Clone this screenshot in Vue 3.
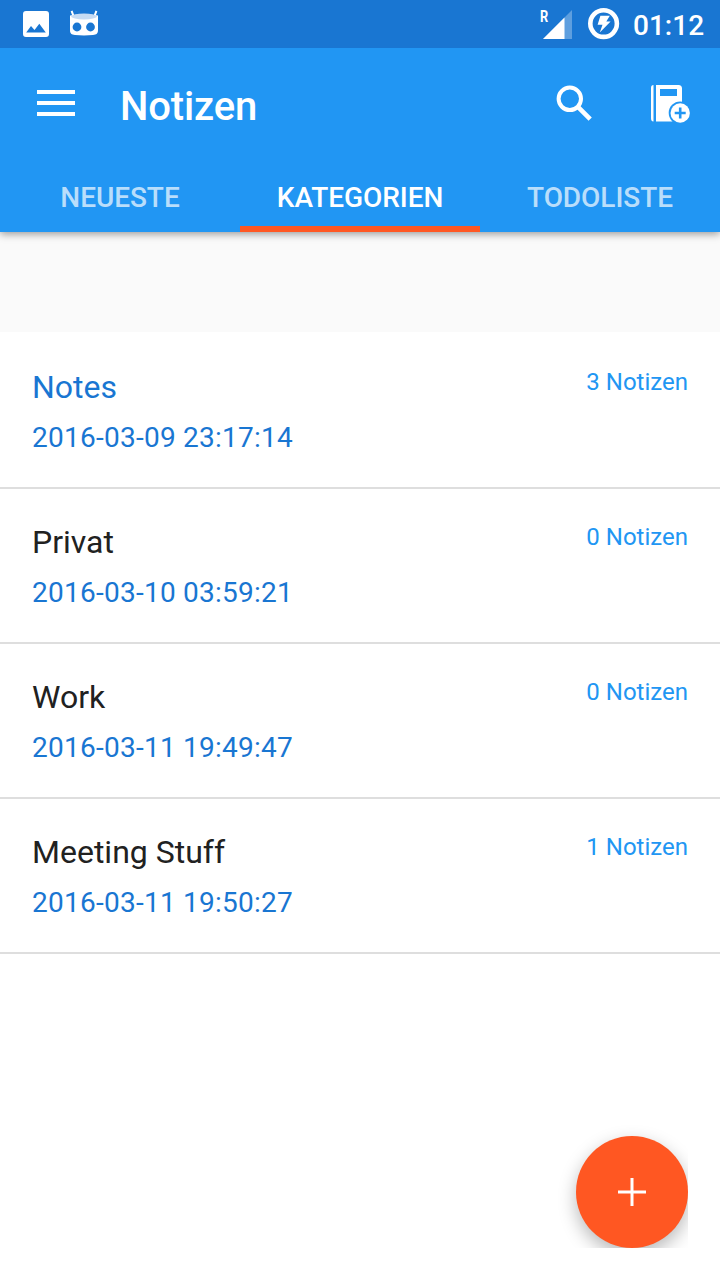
<script setup>
const tabs = [
  { label: 'NEUESTE', active: false },
  { label: 'KATEGORIEN', active: true },
  { label: 'TODOLISTE', active: false },
]
const categories = [
  { name: 'Notes', date: '2016-03-09 23:17:14', count: 3, selected: true },
  { name: 'Privat', date: '2016-03-10 03:59:21', count: 0, selected: false },
  { name: 'Work', date: '2016-03-11 19:49:47', count: 0, selected: false },
  { name: 'Meeting Stuff', date: '2016-03-11 19:50:27', count: 1, selected: false },
]
</script>

<template>
  <div class="screen">
    <div class="status">
      <svg class="image-icon" width="26" height="26" viewBox="0 0 26 26">
        <path fill="#fff" fill-rule="evenodd" d="M3 0h20a3 3 0 0 1 3 3v20a3 3 0 0 1-3 3H3a3 3 0 0 1-3-3V3a3 3 0 0 1 3-3zM3.200 21.500h19.600L16.300 12.800 11.500 19.100 8 14.900z" />
      </svg>
      <svg class="robot-icon" width="30" height="28" viewBox="0 0 30 28">
        <path d="M2.600 .8l2 5.500M27.400 .8l-2 5.500" stroke="#fff" stroke-width="2" />
        <path fill="#fff" d="M1 5.500Q15 3 29 5.500V20c0 3.500-1.500 4.700-5 5-6 .6-12 .6-18 0C2.500 24.700 1 23.500 1 20z" />
        <ellipse cx="15" cy="6.500" rx="12.800" ry="2.900" fill="#c6dbf3" />
        <circle cx="8" cy="17" r="4.400" fill="#1976d2" />
        <circle cx="21.500" cy="17" r="4.400" fill="#1976d2" />
      </svg>
      <span class="gap"></span>
      <span class="signal">
        <span class="roaming">R</span>
        <svg width="29" height="29" viewBox="0 0 29 29">
          <path d="M29 0v29H0z" fill="#fff" fill-opacity=".3" />
          <path d="M21.500 7.500v21.500H0z" fill="#fff" />
        </svg>
      </span>
      <svg class="battery" width="32" height="32" viewBox="0 0 32 32">
        <circle cx="15.600" cy="15.600" r="13.300" fill="none" stroke="#fff" stroke-width="4.600" />
        <path fill="#fff" d="M12.400 7.800h9.400l-3.500 5.600h4.300L11.800 24.400l2.700-7.700H9.600z" />
      </svg>
      <span class="clock">01:12</span>
    </div>

    <header class="appbar">
      <div class="toolbar">
        <svg class="menu" width="38" height="26" viewBox="0 0 38 26">
          <path d="M0 0h38v4H0zM0 11h38v4H0zM0 22h38v4H0z" fill="#fff" />
        </svg>
        <h1>Notizen</h1>
        <svg class="search" width="38" height="38" viewBox="0 0 38 38">
          <circle cx="13.800" cy="13.800" r="11.200" fill="none" stroke="#fff" stroke-width="4" />
          <path d="M22.200 22.200L34.200 34.200" stroke="#fff" stroke-width="4.600" />
        </svg>
        <svg class="book" width="40" height="40" viewBox="0 0 40 40">
          <path d="M3.500 1v36.500C1.500 37.500 1 36 1 34V4C1 2 1.800 1 3.500 1z" fill="#fff" />
          <path fill-rule="evenodd" d="M6 1h22.500a3.500 3.500 0 0 1 3.500 3.500V37.500H6zM10 5v7h17V5z" fill="#fff" />
          <circle cx="30.200" cy="29" r="11.500" fill="#2196f3" />
          <circle cx="30.200" cy="29" r="9.700" fill="#fff" />
          <path d="M30.200 23.500v11M24.700 29h11" stroke="#2196f3" stroke-width="2.600" />
        </svg>
      </div>
      <nav class="tabs">
        <div v-for="tab in tabs" :key="tab.label" class="tab" :class="{ active: tab.active }">{{ tab.label }}</div>
      </nav>
    </header>

    <div class="spacer"></div>

    <main class="list">
      <article v-for="item in categories" :key="item.name" class="row">
        <div>
          <div class="name" :class="{ selected: item.selected }">{{ item.name }}</div>
          <div class="date">{{ item.date }}</div>
        </div>
        <div class="count">{{ item.count }} Notizen</div>
      </article>
    </main>

    <div class="fab-frame">
      <button class="fab" aria-label="Neu">
        <svg width="28" height="28" viewBox="0 0 28 28">
          <path d="M12.500 0h3v28h-3zM0 12.500h28v3H0z" fill="#fff" />
        </svg>
      </button>
    </div>
  </div>
</template>

<style>
body { margin: 0; }
</style>

<style scoped>
.screen {
  position: relative;
  width: 720px;
  height: 1280px;
  overflow: hidden;
  background: #fff;
  font-family: Roboto, sans-serif;
}
svg { display: block; flex: none; }
.status {
  position: relative;
  z-index: 1;
  display: flex;
  height: 48px;
  box-sizing: border-box;
  padding: 0 16px 0 23px;
  background: #1976d2;
  color: #fff;
}
.image-icon { margin-top: 11px; }
.robot-icon { margin: 10px 0 0 20px; }
.gap { flex: 1; }
.signal { display: flex; position: relative; padding: 10px 0 0 3px; }
.roaming {
  position: absolute;
  left: 0;
  top: 9px;
  font-size: 16px;
  line-height: 16px;
  font-weight: 700;
  transform: scaleX(.8);
  transform-origin: 0 0;
}
.battery { margin: 8px 0 0 16px; }
.clock {
  width: 71px;
  margin-left: 13px;
  padding-top: 9px;
  font-size: 28px;
  line-height: 33px;
  font-weight: 500;
  white-space: nowrap;
}
.appbar {
  position: relative;
  height: 184px;
  background: #2196f3;
  color: #fff;
  box-shadow: 0 2px 8px rgba(0, 0, 0, .4);
}
.toolbar { display: flex; height: 112px; padding: 0 30px 0 37px; }
.menu { margin-top: 42px; }
h1 {
  flex: 1;
  margin: 35px 0 0 45px;
  font-size: 40px;
  line-height: 48px;
  font-weight: 500;
  letter-spacing: -.15px;
}
.search { margin: 37px 56px 0 0; }
.book { margin-top: 36px; }
.tabs { display: grid; grid-template-columns: repeat(3, 1fr); height: 72px; }
.tab {
  box-sizing: border-box;
  padding-top: 21px;
  text-align: center;
  font-size: 28px;
  line-height: 33px;
  font-weight: 500;
  letter-spacing: -.05px;
  color: rgba(255, 255, 255, .7);
}
.tab.active { color: #fff; border-bottom: 6px solid #ff5722; }
.spacer { height: 100px; background: #fafafa; }
.list { padding-top: 2px; }
.row {
  display: flex;
  justify-content: space-between;
  box-sizing: border-box;
  height: 155px;
  padding: 34px 32px 0;
  border-bottom: 2px solid #dedede;
}
.name { font-size: 32px; line-height: 38px; color: #212121; }
.name.selected { color: #1976d2; }
.date {
  margin-top: 15px;
  font-size: 28px;
  line-height: 34px;
  letter-spacing: .25px;
  color: #1976d2;
}
.count { font-size: 24px; line-height: 28px; color: #2196f3; }
.fab-frame {
  position: absolute;
  right: 32px;
  bottom: 32px;
  padding: 24px 0 0 24px;
  overflow: hidden;
}
.fab {
  display: flex;
  align-items: center;
  justify-content: center;
  width: 112px;
  height: 112px;
  border: 0;
  padding: 0;
  border-radius: 50%;
  background: #ff5722;
  box-shadow: 0 7px 18px rgba(0, 0, 0, .28);
}
</style>
